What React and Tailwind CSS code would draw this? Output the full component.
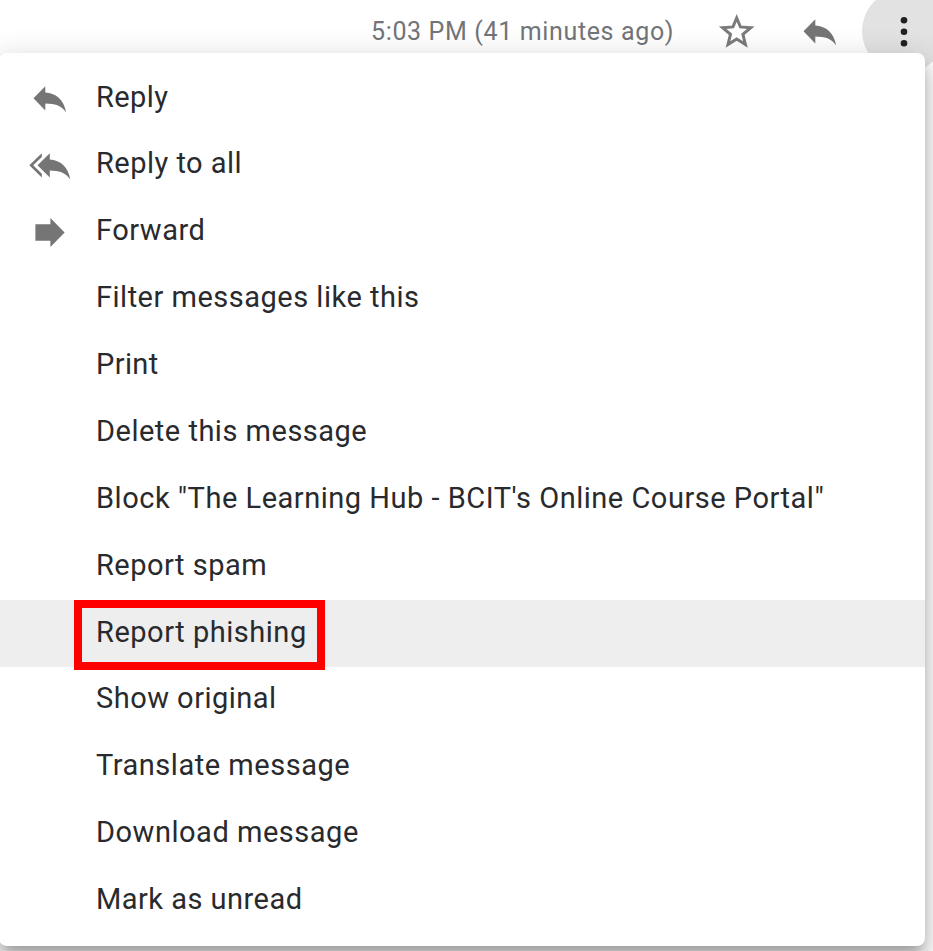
const ITEMS = [
  { label: 'Reply', icon: 'reply', tracking: 'tracking-[0.4px]' },
  { label: 'Reply to all', icon: 'replyAll', tracking: 'tracking-[0.48px]' },
  { label: 'Forward', icon: 'forward', tracking: 'tracking-[0.5px]' },
  { label: 'Filter messages like this', tracking: 'tracking-[0.5px]' },
  { label: 'Print', tracking: 'tracking-[0.4px]' },
  { label: 'Delete this message', tracking: 'tracking-[0.5px]' },
  { label: 'Block "The Learning Hub - BCIT\'s Online Course Portal"', tracking: 'tracking-[0.515px]' },
  { label: 'Report spam', tracking: 'tracking-[0.5px]' },
  { label: 'Report phishing', tracking: 'tracking-[0.52px]', active: true },
  { label: 'Show original', tracking: 'tracking-[0.48px]' },
  { label: 'Translate message', tracking: 'tracking-[0.52px]' },
  { label: 'Download message', tracking: 'tracking-[0.52px]' },
  { label: 'Mark as unread', tracking: 'tracking-[0.48px]' },
];

function ReplyIcon({ className }) {
  return (
    <svg viewBox="0 0 34 28" className={className} fill="#757575">
      <path d="M0.5 13.3 L12.3 1.2 V7.6 C23.5 8.5 30.7 14.8 33.2 27.5 C28 20.4 22 18.8 12.3 18.6 V25.4 Z" />
    </svg>
  );
}

function ReplyAllIcon() {
  return (
    <svg viewBox="0 0 42 28" className="h-7 w-[42px]" fill="#757575">
      <path d="M8.5 13.3 L20.8 1.2 V7.6 C31.5 8.5 39 14.8 41.3 27.5 C36 20.4 30 18.8 20.8 18.6 V25.4 Z" />
      <path d="M12.8 1.3 V5 L4.2 13.3 L12.8 21.8 V25.4 L0.3 13.3 Z" />
    </svg>
  );
}

function ForwardIcon() {
  return (
    <svg viewBox="0 0 30 30" className="h-[30px] w-[30px]" fill="#757575">
      <path d="M0.4 6.3 H15.4 V0.1 L29.6 14.5 L15.4 28.9 V22.8 H0.4 Z" />
    </svg>
  );
}

function MenuIcon({ name }) {
  if (name === 'reply') return <ReplyIcon className="h-7 w-[34px]" />;
  if (name === 'replyAll') return <ReplyAllIcon />;
  if (name === 'forward') return <ForwardIcon />;
  return null;
}

function MenuItem({ item }) {
  return (
    <li className={`flex h-[66.87px] items-center ${item.active ? 'bg-[#eeeeee]' : ''}`}>
      <span className="flex w-[97px] shrink-0 justify-center pb-px pl-[4px] pt-[3px]">
        <MenuIcon name={item.icon} />
      </span>
      <span className={`relative whitespace-pre pb-[3.6px] leading-8 ${item.tracking}`}>
        {item.label}
        {item.active && (
          <span className="absolute -left-[22px] -top-[15.6px] h-[70px] w-[251px] border-8 border-[#ff0000]" />
        )}
      </span>
    </li>
  );
}

export default function App() {
  return (
    <div className="relative h-[951px] w-[933px] overflow-hidden bg-white font-['Roboto',sans-serif]">
      <header className="flex h-[53px] items-start">
        <span className="ml-[371px] mt-4 w-[347px] shrink-0 whitespace-pre text-[25px] leading-8 tracking-[0.64px] text-[#727478]">
          5:03 PM (41 minutes ago)
        </span>
        <svg viewBox="0 0 38 36" className="mt-[13px] h-9 w-[38px] shrink-0" fill="none" stroke="#7b7b7b" strokeWidth="3">
          <path d="M18.7 5 L22.4 13.9 L32.8 14.7 L24.9 21.4 L27.4 31.4 L18.7 26 L10 31.4 L12.5 21.4 L4.6 14.7 L15 13.9 Z" />
        </svg>
        <ReplyIcon className="ml-[47px] mt-[18px] h-7 w-[34px] shrink-0" />
        <span className="-mt-[11px] ml-[25px] flex h-[84px] w-[84px] shrink-0 items-center justify-center rounded-full bg-[#e2e2e2]">
          <svg viewBox="0 0 8 32" className="h-8 w-2" fill="#202124">
            <circle cx="4" cy="5.2" r="3.3" />
            <circle cx="4" cy="16.7" r="3.3" />
            <circle cx="4" cy="28.3" r="3.3" />
          </svg>
        </span>
      </header>
      <ul className="relative -ml-px h-[893px] w-[926px] rounded-lg bg-white pt-3 text-[29px] text-[#292a2d] shadow-[0_17px_21px_2px_rgba(0,0,0,0.14),0_6px_29px_5px_rgba(0,0,0,0.12),0_10px_12px_-4px_rgba(0,0,0,0.2)]">
        {ITEMS.map((item) => (
          <MenuItem key={item.label} item={item} />
        ))}
      </ul>
    </div>
  );
}
